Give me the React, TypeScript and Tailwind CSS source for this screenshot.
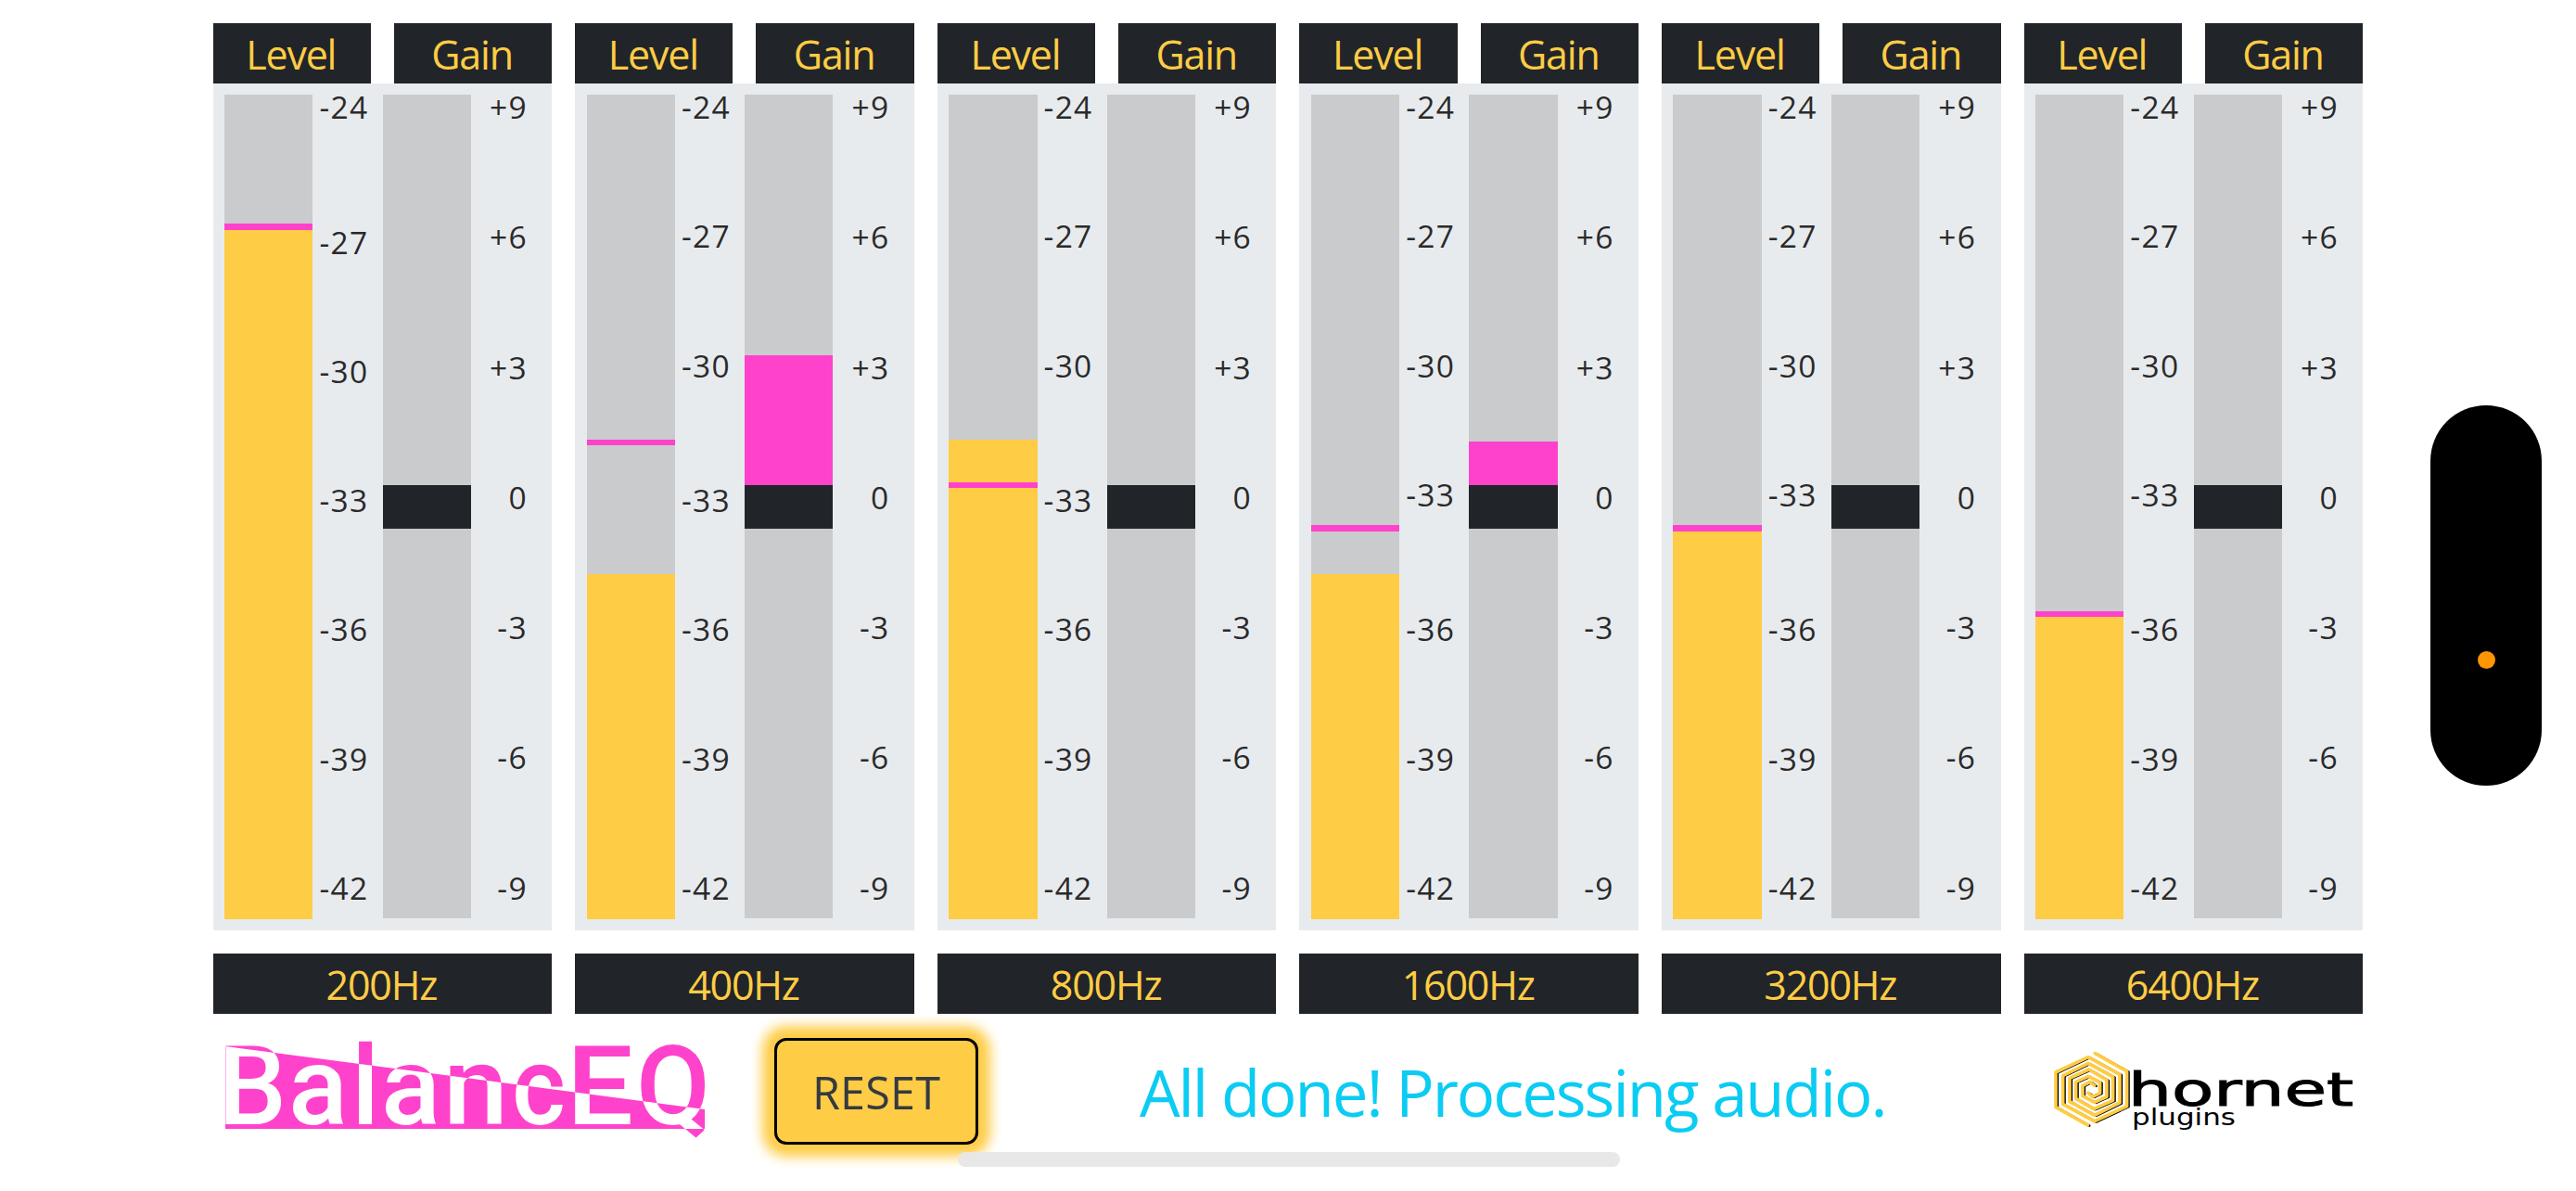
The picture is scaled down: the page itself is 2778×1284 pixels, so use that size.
interface Band {
  freq: string;
  peak: number; // rows above the target marker
  level: number; // filled rows, counted from the bottom
  gain: number; // rows above the zero block
}

const ROWS = 19;

const BANDS: Band[] = [
  { freq: "200Hz", peak: 3, level: 16, gain: 0 },
  { freq: "400Hz", peak: 8, level: 8, gain: 3 },
  { freq: "800Hz", peak: 9, level: 11, gain: 0 },
  { freq: "1600Hz", peak: 10, level: 8, gain: 1 },
  { freq: "3200Hz", peak: 10, level: 9, gain: 0 },
  { freq: "6400Hz", peak: 12, level: 7, gain: 0 },
];

const LEVEL_LABELS = ["-24", "-27", "-30", "-33", "-36", "-39", "-42"];
const GAIN_LABELS = ["+9", "+6", "+3", "0", "-3", "-6", "-9"];

const rows = Array.from({ length: ROWS }, (_, i) => i);

function Header({ children }: { children: string }) {
  return (
    <div className="flex h-[65px] w-[170.3px] items-center justify-center bg-[#212529] pt-[3px] pr-[2px] text-[43px] tracking-[-1.2px] text-[#ffcc45]">
      {children}
    </div>
  );
}

function LevelMeter({ peak, level }: { peak: number; level: number }) {
  return (
    <div className="flex w-[170.5px] flex-col">
      {rows.map((i) => (
        <div key={i} className="contents">
          {i === peak && <div className="h-[6.2px] w-[95.3px] shrink-0 bg-[#ff42cc]" />}
          <div className="flex h-[46.44px] shrink-0">
            <div
              className={`w-[95.3px] shrink-0 ${
                i >= ROWS - level ? "bg-[#ffcc45]" : "bg-[#cacbcd]"
              }`}
            />
            {i % 3 === 0 && (
              <span className="h-[26px] w-[60px] text-right leading-[26px]">
                {LEVEL_LABELS[i / 3]}
              </span>
            )}
          </div>
        </div>
      ))}
    </div>
  );
}

function GainMeter({ gain }: { gain: number }) {
  const color = (i: number) => {
    if (i === 9) return "bg-[#212529]";
    if (i < 9 && i >= 9 - gain) return "bg-[#ff42cc]";
    return "bg-[#cacbcd]";
  };

  return (
    <div className="flex flex-col">
      {rows.map((i) => (
        <div key={i} className="flex h-[46.76px] shrink-0">
          <div className={`w-[95.3px] shrink-0 ${color(i)}`} />
          {i % 3 === 0 && (
            <span className="h-[26px] w-[61px] text-right leading-[26px]">
              {GAIN_LABELS[i / 3]}
            </span>
          )}
        </div>
      ))}
    </div>
  );
}

function BandStrip({ band }: { band: Band }) {
  return (
    <div className="w-[365.6px] shrink-0">
      <div className="flex justify-between">
        <Header>Level</Header>
        <Header>Gain</Header>
      </div>
      <div className="flex h-[913px] bg-[#e8ebee] pt-[12px] pl-[12.5px] text-[33.5px] font-[370] tracking-[1.3px] text-[#2a2a2a]">
        <LevelMeter peak={band.peak} level={band.level} />
        <GainMeter gain={band.gain} />
      </div>
      <div className="mt-[25px] flex h-[65px] items-center justify-center bg-[#212529] pt-[3px] pr-[2px] text-[43px] tracking-[-1.2px] text-[#ffcc45]">
        {band.freq}
      </div>
    </div>
  );
}

function BalancEQLogo() {
  const letters = (
    <>
      <text x="-8" y="89" textLength="74" lengthAdjust="spacingAndGlyphs">B</text>
      <text x="68" y="89" textLength="64" lengthAdjust="spacingAndGlyphs">a</text>
      <text x="136" y="89">l</text>
      <text x="168" y="89" textLength="64" lengthAdjust="spacingAndGlyphs">a</text>
      <text x="235" y="89" textLength="70" lengthAdjust="spacingAndGlyphs">n</text>
      <text x="309" y="89" textLength="58" lengthAdjust="spacingAndGlyphs">c</text>
      <text x="368" y="89" textLength="72" lengthAdjust="spacingAndGlyphs">E</text>
      <text x="443" y="89" textLength="80" lengthAdjust="spacingAndGlyphs">Q</text>
    </>
  );
  return (
    <svg
      className="h-[120px] w-[540px] overflow-visible font-['Roboto',sans-serif] text-[118px] font-[470]"
      viewBox="0 0 540 120"
    >
      <clipPath id="wedge">
        <path d="M0 5 L517 73 V94 H0 Z" />
      </clipPath>
      <g fill="#ff42cc">{letters}</g>
      <path d="M0 5 L517 73 V94 H0 Z" fill="#ff42cc" />
      <g fill="#fff" clipPath="url(#wedge)">
        {letters}
      </g>
    </svg>
  );
}

const ARM =
  "-12,116 -115,58 -115,-55 -10,-104 92,-48 92,44 10,84 -70,40 -70,-36 -8,-64 50,-30 50,24 10,42 -28,22 -28,-12 -4,-24 10,-12";

function HornetLogo() {
  return (
    <svg className="h-[90px] w-[336px] font-['DejaVu_Sans',sans-serif]" viewBox="0 0 336 90">
      <g
        transform="translate(45.3 44.3) scale(0.3333)"
        fill="none"
        strokeLinecap="round"
        strokeLinejoin="round"
      >
        <g stroke="#000" strokeWidth="7" transform="translate(6 2)">
          <polyline points={ARM} />
          <polyline points={ARM} transform="rotate(180)" />
        </g>
        <g stroke="#fc4" strokeWidth="11">
          <polyline points={ARM} />
          <polyline points={ARM} transform="rotate(180)" />
        </g>
      </g>
      <text x="85" y="62" fontSize="49" textLength="243" lengthAdjust="spacingAndGlyphs" stroke="#000">
        hornet
      </text>
      <text x="89" y="83" fontSize="24" textLength="112" lengthAdjust="spacingAndGlyphs">
        plugins
      </text>
    </svg>
  );
}

export default function App() {
  return (
    <div className="relative h-[1284px] w-[2778px] overflow-hidden bg-white font-['Open_Sans',sans-serif]">
      <main className="flex gap-[25px] pt-[25px] pl-[229.6px]">
        {BANDS.map((band) => (
          <BandStrip key={band.freq} band={band} />
        ))}
      </main>

      <footer className="flex pt-[26px] pl-[242.5px]">
        <div className="mt-[4px] w-[592.5px]">
          <BalancEQLogo />
        </div>
        <button
          type="button"
          className="flex h-[115px] w-[220px] items-center justify-center rounded-[13px] border-[3px] border-black bg-[#ffcc45] pt-[2px] text-[48.5px] font-[370] tracking-[0.2px] text-[#343a40] shadow-[0_0_13px_13px_#ffcc45]"
        >
          RESET
        </button>
        <p className="ml-[174px] w-[981px] text-[69px] leading-[117px] tracking-[-2.1px] whitespace-nowrap text-[#0bccf2]">
          All done! Processing audio.
        </p>
        <div className="mt-[11px]">
          <HornetLogo />
        </div>
      </footer>

      {/* Home indicator */}
      <div className="absolute top-[1241.5px] left-[1032.5px] h-[16px] w-[714px] rounded-full bg-[#e7e7e7]/95" />

      {/* Camera cutout with the microphone-in-use dot */}
      <div className="absolute top-[437px] left-[2621.3px] flex h-[410px] w-[120px] items-end justify-center rounded-full bg-black pb-[126px]">
        <div className="size-[19px] rounded-full bg-[#ff9500]" />
      </div>
    </div>
  );
}
